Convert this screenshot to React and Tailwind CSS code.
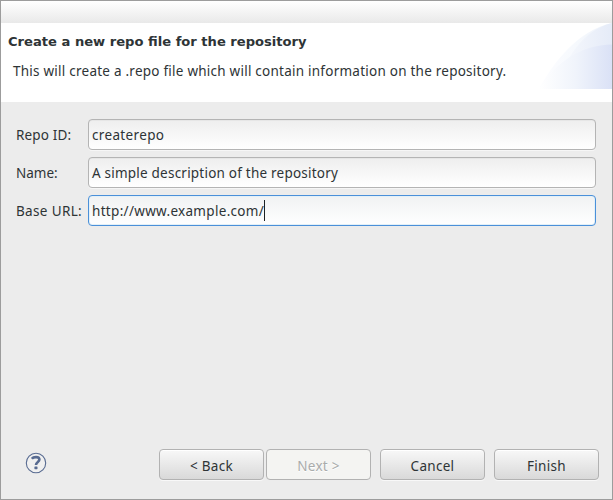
import React from "react";

const fields = [
  { label: "Repo ID:", value: "createrepo", labelClass: "tracking-[0.15px]", valueClass: "tracking-[0.35px]" },
  { label: "Name:", value: "A simple description of the repository", labelClass: "tracking-[0px]", valueClass: "tracking-[0.22px]" },
  { label: "Base URL:", value: "http://www.example.com/", labelClass: "tracking-[0.35px]", valueClass: "tracking-[0.31px]", focused: true },
];

function Field({ label, value, labelClass, valueClass, focused }) {
  return (
    <div className="flex h-[31px] items-center">
      <label className={`w-[72px] shrink-0 whitespace-nowrap leading-[18px] ${labelClass}`}>{label}</label>
      <div
        className={`flex h-[31px] flex-1 items-center rounded-[4px] border bg-linear-to-b to-white pl-[3px] ${
          focused
            ? "border-[#4a90d9] from-[#f0f2f3] shadow-[inset_0_0_0_1px_#e3f0f8]"
            : "border-[#b4b4b4] from-[#eeeeee] shadow-[inset_0_1px_0_#e6e6e6,0_1px_0_#f6f6f6]"
        }`}
      >
        <span className={`whitespace-nowrap leading-[18px] ${valueClass}`}>{value}</span>
        {focused && <span className="h-[21px] w-px bg-[#1c2224]" />}
      </div>
    </div>
  );
}

function Button({ children, disabled, className = "" }) {
  return (
    <button
      disabled={disabled}
      className={`flex h-[31px] w-[105px] items-center justify-center rounded-[4px] border border-[#b2b2b2] pt-[3px] ${
        disabled
          ? "bg-[#f4f4f2] text-[#a9abab] [text-shadow:0_1px_0_white]"
          : "bg-linear-to-b from-[#f8f8f8] to-[#d9d9d9] shadow-[inset_0_1px_0_white,0_1px_0_#f8f8f8]"
      } ${className}`}
    >
      {children}
    </button>
  );
}

function Banner() {
  return (
    <svg className="h-[66px] w-[73px]" viewBox="0 0 73 66">
      <defs>
        <linearGradient id="fade">
          <stop offset="0" stopColor="#fdfdff" />
          <stop offset=".5" stopColor="#f6f9fd" />
          <stop offset="1" stopColor="#edf2fa" />
        </linearGradient>
        <linearGradient id="middle">
          <stop offset="0" stopColor="#f8fafd" />
          <stop offset="1" stopColor="#e5ebf8" />
        </linearGradient>
        <linearGradient id="arc">
          <stop offset="0" stopColor="#ffffff" />
          <stop offset=".5" stopColor="#f0f4fb" />
          <stop offset="1" stopColor="#dae1f6" />
        </linearGradient>
      </defs>
      <path d="M0 66C14 40 38 8 73 0V66Z" fill="url(#fade)" />
      <path d="M20 66C23 38 44 7 73 0V66Z" fill="url(#middle)" />
      <path d="M0 66C17 39 42 22 73 21.5V66Z" fill="url(#arc)" />
    </svg>
  );
}

export default function App() {
  return (
    <div className="flex h-[500px] w-[613px] flex-col border border-[#9c9c9c] bg-[#ececec] font-['Noto_Sans',sans-serif] text-[13.5px] text-[#2e3436]">
      <div className="h-[22px] shrink-0 bg-linear-to-b from-white to-[#e9e9e9]" />
      <header className="flex h-[79px] shrink-0 justify-between bg-white">
        <div className="flex flex-col">
          <h1 className="mt-[10px] ml-[7px] whitespace-nowrap font-['DejaVu_Sans',sans-serif] text-[13.1px] leading-[18px] font-bold">
            Create a new repo file for the repository
          </h1>
          <p className="mt-[11px] ml-[12px] whitespace-nowrap leading-[18px] tracking-[0.24px]">
            This will create a .repo file which will contain information on the repository.
          </p>
        </div>
        <Banner />
      </header>
      <main className="flex flex-1 flex-col gap-[7px] pt-[17px] pr-[16px] pl-[15px]">
        {fields.map((field) => (
          <Field key={field.label} {...field} />
        ))}
      </main>
      <footer className="flex h-[50px] shrink-0 items-start pr-[13px] pl-[24px]">
        <svg className="mt-[3px] size-[22px]" viewBox="0 0 22 22" fill="none">
          <circle cx="11" cy="11" r="9.7" fill="#f0f0f0" stroke="#586b91" strokeWidth="1.1" />
          <path d="M6.8 6.7C8.4 4.7 14.4 4.2 14.4 7.6C14.4 10 11 10 11 13" stroke="#586b91" strokeWidth="2.6" />
          <rect x="9.4" y="14.4" width="3.1" height="2.8" rx=".6" fill="#586b91" />
        </svg>
        <div className="ml-auto flex tracking-[0.3px]">
          <Button>&lt; Back</Button>
          <Button disabled className="ml-[2px]">Next &gt;</Button>
          <Button className="ml-[9px]">Cancel</Button>
          <Button className="ml-[9px]">Finish</Button>
        </div>
      </footer>
    </div>
  );
}
